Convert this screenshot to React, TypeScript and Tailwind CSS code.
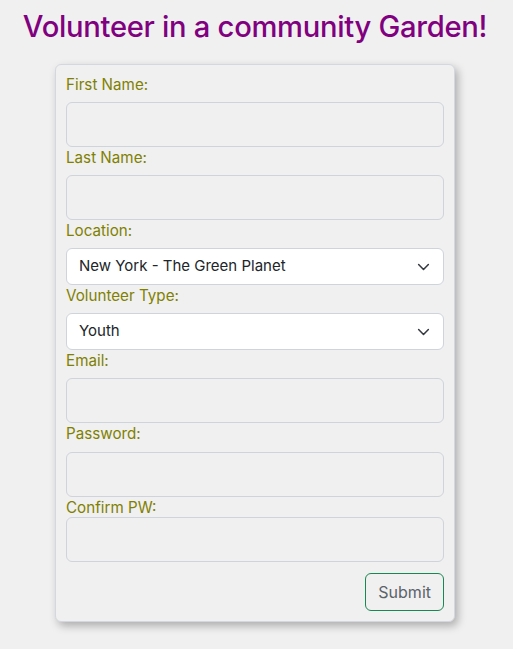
import React from "react";

const font = { fontFamily: "Inter, 'Noto Sans', sans-serif" };

function Label({ text, mb }: { text: string; mb: string }) {
  return (
    <label className={`block h-5 pt-[2px] text-[15.2px] leading-[18px] text-[#808000] ${mb}`}>
      {text}
    </label>
  );
}

function Input({ type = "text" }: { type?: string }) {
  return (
    <input
      type={type}
      className="block w-full h-[45px] rounded-[6px] border border-[#ced4da] bg-transparent px-3 text-[16px] outline-none"
    />
  );
}

function Chevron() {
  return (
    <svg
      width="13"
      height="13"
      viewBox="0 0 16 16"
      className="absolute right-[14px] top-1/2 -translate-y-1/2 pointer-events-none"
    >
      <path d="M2 5l6 6 6-6" fill="none" stroke="#343a40" strokeWidth="1.9" strokeLinecap="round" strokeLinejoin="round" />
    </svg>
  );
}

function Select({ value }: { value: string }) {
  return (
    <div className="relative">
      <select
        defaultValue={value}
        className="block w-full h-[37px] appearance-none rounded-[6px] border border-[#ced4da] bg-white pl-3 pr-10 text-[15px] text-[#212529] outline-none"
        style={font}
      >
        <option>{value}</option>
      </select>
      <Chevron />
    </div>
  );
}

export default function App() {
  return (
    <div className="min-h-[649px] w-full bg-[#f0f0f0] flex flex-col items-center pr-[3px]" style={font}>
      <h1 className="mt-[8px] h-[38px] text-[29.2px] leading-[38px] font-medium tracking-[-0.3px] text-[#800080]">
        Volunteer in a community Garden!
      </h1>
      <form
        className="mt-[18px] w-[400px] rounded-[6px] border border-[#d4d8de] bg-[#f0f0f0] px-[10px] pt-[9px] pb-[10px] shadow-[3px_4px_8px_rgba(0,0,0,0.28)]"
        onSubmit={(e) => e.preventDefault()}
      >
        <Label text="First Name:" mb="mb-2" />
        <Input />
        <Label text="Last Name:" mb="mb-2" />
        <Input />
        <Label text="Location:" mb="mb-2" />
        <Select value="New York - The Green Planet" />
        <Label text="Volunteer Type:" mb="mb-2" />
        <Select value="Youth" />
        <Label text="Email:" mb="mb-2" />
        <Input type="email" />
        <Label text="Password:" mb="mb-[9px]" />
        <Input type="password" />
        <Label text="Confirm PW:" mb="mb-0" />
        <Input type="password" />
        <div className="mt-[11px] flex justify-end">
          <button
            type="submit"
            className="h-[38px] rounded-[6px] border border-[#198754] px-3 text-[16px] text-[#5c636a] bg-transparent"
          >
            Submit
          </button>
        </div>
      </form>
    </div>
  );
}
